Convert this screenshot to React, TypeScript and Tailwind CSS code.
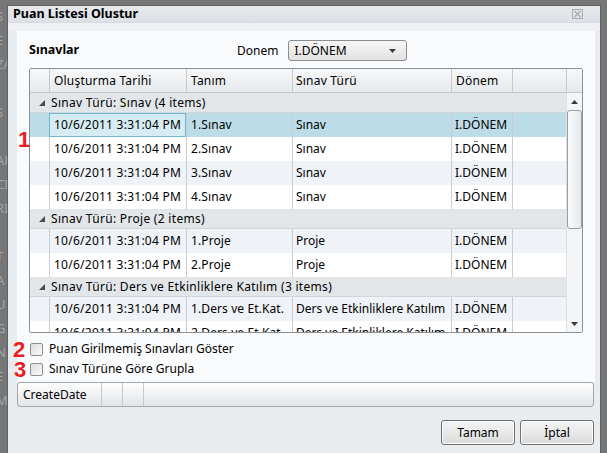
import React from 'react';

type Row = { tanim: string; tur: string };
type Group = { title: string; rows: Row[] };

// only the rows that fit in the grid viewport are listed
const groups: Group[] = [
  {
    title: 'Sınav Türü: Sınav (4 items)',
    rows: [
      { tanim: '1.Sınav', tur: 'Sınav' },
      { tanim: '2.Sınav', tur: 'Sınav' },
      { tanim: '3.Sınav', tur: 'Sınav' },
      { tanim: '4.Sınav', tur: 'Sınav' },
    ],
  },
  {
    title: 'Sınav Türü: Proje (2 items)',
    rows: [
      { tanim: '1.Proje', tur: 'Proje' },
      { tanim: '2.Proje', tur: 'Proje' },
    ],
  },
  {
    title: 'Sınav Türü: Ders ve Etkinliklere Katılım (3 items)',
    rows: [
      { tanim: '1.Ders ve Et.Kat.', tur: 'Ders ve Etkinliklere Katılım' },
      { tanim: '2.Ders ve Et.Kat.', tur: 'Ders ve Etkinliklere Katılım' },
    ],
  },
];

const bgLetters = ['S', 'E', 'ZA', '', 'S', '', 'AH', 'CI', 'RI', '', 'T', 'A', 'U', 'G', 'N', 'E', 'M'];

function GroupRow({ title }: { title: string }) {
  return (
    <div className="flex h-[20px] items-center bg-[#e3e6e9] border-b border-[#d2d6da]">
      <div className="w-[21px] flex justify-end pr-[6px]">
        <svg width="6" height="6" viewBox="0 0 6 6">
          <polygon points="6,0 6,6 0,6" fill="#4a4a4a" />
        </svg>
      </div>
      <span className="whitespace-nowrap tracking-[0.3px]">{title}</span>
    </div>
  );
}

function DataRow({ row, alt, selected }: { row: Row; alt: boolean; selected: boolean }) {
  const bg = selected ? 'bg-[#bcdde8]' : alt ? 'bg-[#eff2f6]' : 'bg-white';
  return (
    <div className={`flex h-[24px] ${bg}`}>
      <div className="w-[19px] shrink-0" />
      <div
        className={`w-[137px] shrink-0 flex items-center pl-[4px] whitespace-nowrap overflow-hidden border-l tracking-[0.25px] ${
          selected ? 'border border-[#6cb8cd] bg-[#d6ecf3]' : 'border-[#c9cdd1]'
        }`}
      >
        10/6/2011 3:31:04 PM
      </div>
      <div className="w-[106px] shrink-0 flex items-center pl-[4px] whitespace-nowrap overflow-hidden border-l border-[#c9cdd1] tracking-[0.1px]">
        {row.tanim}
      </div>
      <div className="w-[159px] shrink-0 flex items-center pl-[3px] whitespace-nowrap overflow-hidden border-l border-[#c9cdd1]">
        {row.tur}
      </div>
      <div className="w-[61px] shrink-0 flex items-center pl-[3px] whitespace-nowrap overflow-hidden border-l border-[#c9cdd1]">
        I.DÖNEM
      </div>
      <div className="w-[54px] shrink-0 border-l border-[#c9cdd1]" />
    </div>
  );
}

function Checkbox({ label }: { label: string }) {
  return (
    <div className="flex items-center h-[20px]">
      <div className="w-[13px] h-[13px] rounded-[2px] border border-[#8e8f8f] bg-gradient-to-br from-[#dcdcdc] to-[#fbfbfb]" />
      <span className="ml-[6px] leading-[16px]">{label}</span>
    </div>
  );
}

function Button({ label }: { label: string }) {
  return (
    <button className="w-[74px] h-[25px] rounded-[3px] border border-[#707070] bg-gradient-to-b from-[#f4f4f4] via-[#e9e9e9] to-[#d9d9d9] text-[12px] text-black shadow-[inset_0_0_0_1px_#fcfcfc]">
      {label}
    </button>
  );
}

export default function App() {
  let counter = 0;
  return (
    <div className="w-[607px] h-[453px] overflow-hidden bg-[#767676] flex font-['Noto_Sans','Open_Sans',sans-serif] text-[12px] text-black">
      {/* background app peeking at the left */}
      <div className="w-[7px] shrink-0 overflow-hidden pt-[4px] text-[13px] leading-[24px] text-[#a5a5a5]">
        {bgLetters.map((l, i) => (
          <div key={i} className="-ml-[4px] whitespace-nowrap h-[24px]">
            {l}
          </div>
        ))}
      </div>

      {/* dialog window */}
      <div className="relative mt-[5px] w-[594px] h-[452px] shrink-0 border border-[#5e6166] bg-[#e9ecef] flex flex-col">
        <div className="h-[17px] flex items-center justify-between pl-[5px] pr-[17px] bg-gradient-to-b from-[#e6e9ec] to-[#dde1e5] border-b border-[#d7dbe0]">
          <span className="font-bold text-[12.5px] leading-none">Puan Listesi Olustur</span>
          <svg width="11" height="10" viewBox="0 0 11 10">
            <rect x="0.5" y="0.5" width="10" height="9" fill="none" stroke="#a9adb2" />
            <path d="M2.5 2 L8.5 8 M8.5 2 L2.5 8" stroke="#a9adb2" strokeWidth="1.4" />
          </svg>
        </div>

        <div className="h-[8px] bg-[#eef0f3]" />

        {/* content panel */}
        <div className="ml-[9px] w-[578px] h-[351px] bg-[#fafbfc] pt-[9px] pl-[12px] pr-[12px] flex flex-col">
          <div className="flex items-center h-[21px]">
            <span className="font-bold text-[12.5px] w-[208px]">Sınavlar</span>
            <span className="text-[12px]">Donem</span>
            <div className="ml-[10px] w-[119px] h-[21px] rounded-[3px] border border-[#8a8d91] bg-gradient-to-b from-[#f7f7f7] to-[#e1e1e1] flex items-center justify-between pl-[5px] pr-[10px]">
              <span>I.DÖNEM</span>
              <svg width="7" height="4" viewBox="0 0 7 4">
                <polygon points="0,0 7,0 3.5,4" fill="#3a3a3a" />
              </svg>
            </div>
          </div>

          {/* grid */}
          <div className="mt-[7px] w-[554px] h-[265px] border border-[#8c9196] rounded-[2px] bg-white flex flex-col overflow-hidden">
            <div className="flex h-[24px] bg-gradient-to-b from-[#f6f7f8] to-[#e6e9ec] border-b border-[#c5c9cd] shrink-0 tracking-[0.2px]">
              <div className="w-[19px] shrink-0" />
              <div className="w-[137px] shrink-0 flex items-center pl-[4px] border-l border-[#c5c9cd]">Oluşturma Tarihi</div>
              <div className="w-[106px] shrink-0 flex items-center pl-[4px] border-l border-[#c5c9cd]">Tanım</div>
              <div className="w-[159px] shrink-0 flex items-center pl-[3px] border-l border-[#c5c9cd]">Sınav Türü</div>
              <div className="w-[61px] shrink-0 flex items-center pl-[4px] border-l border-[#c5c9cd]">Dönem</div>
              <div className="w-[54px] shrink-0 border-l border-[#c5c9cd]" />
              <div className="w-[16px] shrink-0 border-l border-[#c5c9cd]" />
            </div>
            <div className="flex flex-1 overflow-hidden">
              <div className="w-[536px] shrink-0 overflow-hidden">
                {groups.map((g) => (
                  <div key={g.title}>
                    <GroupRow title={g.title} />
                    {g.rows.map((r, i) => {
                      const selected = counter === 0;
                      counter++;
                      return <DataRow key={r.tanim} row={r} alt={i % 2 === 0} selected={selected} />;
                    })}
                  </div>
                ))}
              </div>
              <div className="w-[16px] shrink-0 bg-[#f4f5f6] border-l border-[#dfe2e5] flex flex-col items-center">
                <div className="h-[17px] flex items-center justify-center">
                  <svg width="7" height="4" viewBox="0 0 7 4">
                    <polygon points="0,4 7,4 3.5,0" fill="#3a3a3a" />
                  </svg>
                </div>
                <div className="w-[15px] h-[119px] rounded-[3px] border border-[#9a9ea3] bg-gradient-to-r from-[#fbfbfb] to-[#e6e8ea]" />
                <div className="flex-1" />
                <div className="h-[17px] flex items-center justify-center">
                  <svg width="7" height="4" viewBox="0 0 7 4">
                    <polygon points="0,0 7,0 3.5,4" fill="#3a3a3a" />
                  </svg>
                </div>
              </div>
            </div>
          </div>

          <div className="mt-[6px] pl-[1px] flex flex-col">
            <Checkbox label="Puan Girilmemiş Sınavları Göster" />
            <Checkbox label="Sınav Türüne Göre Grupla" />
          </div>
        </div>

        {/* group-by bar */}
        <div className="ml-[9px] w-[577px] h-[25px] rounded-[3px] border border-[#a3a7ab] bg-gradient-to-b from-[#fdfdfd] to-[#e2e5e8] flex">
          <div className="w-[84px] flex items-center pl-[5px] border-r border-[#c6cacd]">CreateDate</div>
          <div className="w-[21px] border-r border-[#c6cacd]" />
          <div className="w-[21px] border-r border-[#c6cacd]" />
        </div>

        <div className="mt-[13px] flex justify-end gap-[5px] pr-[6px]">
          <Button label="Tamam" />
          <Button label="İptal" />
        </div>

        {/* red annotation numbers */}
        <span className="absolute left-[10px] top-[124px] font-['Liberation_Sans',sans-serif] font-bold text-[22px] leading-[20px] text-[#ec1c24]">1</span>
        <span className="absolute left-[5px] top-[334px] font-['Liberation_Sans',sans-serif] font-bold text-[22px] leading-[20px] text-[#ec1c24]">2</span>
        <span className="absolute left-[6px] top-[354px] font-['Liberation_Sans',sans-serif] font-bold text-[22px] leading-[20px] text-[#ec1c24]">3</span>
      </div>
    </div>
  );
}
